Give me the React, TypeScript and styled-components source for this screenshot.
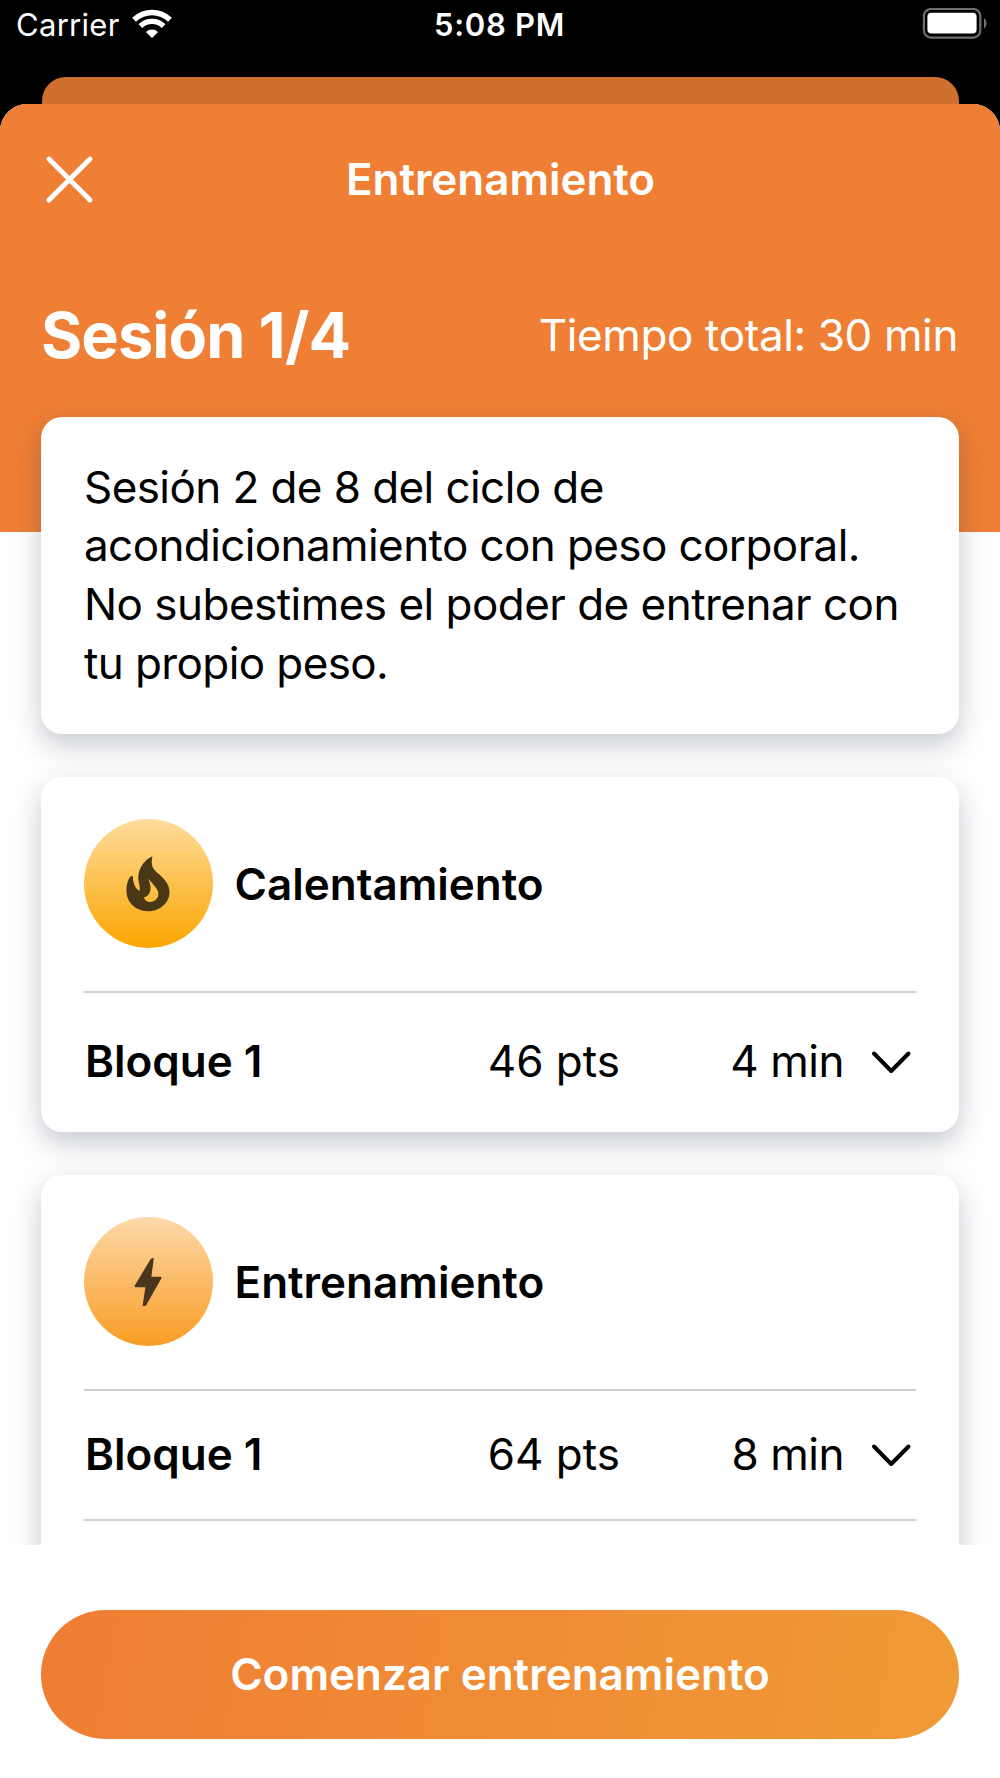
import React from "react";
import styled, { createGlobalStyle } from "styled-components";

const GlobalStyle = createGlobalStyle`
  * { box-sizing: border-box; }
  body { margin: 0; background: #000; }
  h1, h2, h3, p { margin: 0; }
  button { border: 0; padding: 0; background: none; font: inherit; color: inherit; }
`;

const Screen = styled.div`
  width: 1000px;
  height: 1778px;
  overflow: hidden;
  display: flex;
  flex-direction: column;
  background: #000;
  font-family: Inter, "Liberation Sans", sans-serif;
  font-size: 44px;
  color: #000;
`;

const StatusBar = styled.header`
  flex: none;
  height: 77px;
  padding: 6px 13px 0 16px;
  display: grid;
  grid-template-columns: 1fr auto 1fr;
  align-items: start;
  color: #fff;
  font-size: 31px;
  line-height: 38px;
`;

const Network = styled.div`
  display: flex;
  gap: 12px;
  letter-spacing: 0.3px;
`;

const Clock = styled.div`
  font-weight: 600;
  letter-spacing: 0.7px;
  padding-right: 4px;
`;

const BatterySlot = styled.div`
  display: flex;
  justify-content: flex-end;
`;

const StatusIcon = styled.svg<{ $top: number }>`
  display: block;
  margin-top: ${(p) => p.$top}px;
`;

const BackSheet = styled.div`
  flex: none;
  height: 27px;
  margin: 0 41.5px;
  border-radius: 24px 24px 0 0;
  background: #d0702f;
`;

const Sheet = styled.main`
  flex: 1;
  min-height: 0;
  display: flex;
  flex-direction: column;
  border-radius: 27px 27px 0 0;
  overflow: hidden;
  background: #fff;
`;

const Content = styled.div`
  flex: none;
  height: 1441px;
  overflow: hidden;
  background: linear-gradient(#ef7f35 428px, #fff 428px);
`;

const NavBar = styled.div`
  height: 150px;
  padding: 0 44px;
  display: grid;
  grid-template-columns: 60px 1fr 60px;
  align-items: center;
  color: #fff;
`;

const CloseButton = styled.button`
  display: flex;
`;

const NavTitle = styled.h1`
  text-align: center;
  font-size: 44px;
  font-weight: 600;
  letter-spacing: -0.05px;
  padding-left: 1px;
`;

const SessionRow = styled.div`
  height: 163px;
  padding: 0 42px 1px 41px;
  display: flex;
  align-items: center;
  justify-content: space-between;
  color: #fff;
`;

const SessionTitle = styled.h2`
  font-size: 63px;
  font-weight: 700;
  letter-spacing: -0.9px;
`;

const TotalTime = styled.span`
  letter-spacing: -0.38px;
`;

const Cards = styled.div`
  padding: 0 41px;
  display: flex;
  flex-direction: column;
  gap: 43px;
`;

const Card = styled.section<{ $height: number }>`
  flex: none;
  height: ${(p) => p.$height}px;
  padding: 0 43px;
  border-radius: 21px;
  background: #fff;
  box-shadow: 0 11px 29px rgba(25, 38, 65, 0.25);
`;

const Description = styled.p`
  padding: 40.5px 0 0;
  line-height: 58.7px;
  white-space: nowrap;
`;

const Line = styled.span<{ $spacing: number }>`
  display: block;
  letter-spacing: ${(p) => p.$spacing}px;
`;

const CardHeader = styled.div`
  height: 213.5px;
  display: flex;
  align-items: center;
  gap: 21.5px;
`;

const Badge = styled.div<{ $from: string; $to: string }>`
  width: 129px;
  height: 129px;
  border-radius: 50%;
  display: flex;
  align-items: center;
  justify-content: center;
  padding-right: 1px;
  background: linear-gradient(${(p) => p.$from}, ${(p) => p.$to});
`;

const CardTitle = styled.h3`
  font-size: 44px;
  font-weight: 600;
`;

const BlockRow = styled.div<{ $height: number }>`
  height: ${(p) => p.$height}px;
  padding-bottom: 2px;
  border-top: 2px solid #d0d0d0;
  display: grid;
  grid-template-columns: 320px 216px 1fr 72px;
  align-items: center;
  text-align: right;
`;

const BlockName = styled.span`
  text-align: left;
  padding-left: 1px;
  font-weight: 600;
`;

const BlockTime = styled.span`
  letter-spacing: -0.45px;
`;

const Chevron = styled.svg`
  justify-self: end;
`;

const Footer = styled.footer`
  flex: 1;
  padding: 65px 41px 0;
`;

const StartButton = styled.button`
  display: block;
  width: 918px;
  height: 129px;
  padding-bottom: 2px;
  border-radius: 65px;
  background: linear-gradient(100deg, #ef7d34, #f09b36);
  color: #fff;
  font-weight: 600;
`;

const WifiIcon = () => (
  <StatusIcon $top={3} width="40" height="30" viewBox="0.5 0 41 30" fill="none" stroke="#fff">
    <path d="M2.6 10.6a26.4 26.4 0 0 1 36.8 0" strokeWidth="5.6" />
    <path d="M9.1 17.1a17.2 17.2 0 0 1 23.8 0" strokeWidth="5.4" />
    <path d="M21 29.4l-6.2-6.2a9 9 0 0 1 12.4 0z" fill="#fff" stroke="none" />
  </StatusIcon>
);

const BatteryIcon = () => (
  <StatusIcon $top={2} width="65" height="31" viewBox="0 0 65 31">
    <rect x="1.9" y="1" width="56.4" height="28.6" rx="7" fill="none" stroke="#6f6f6f" strokeWidth="2.2" />
    <rect x="5.4" y="4.8" width="49.2" height="20.8" rx="4" fill="#fff" />
    <path d="M62 10.200c3.400 1.600 3.400 8.600 0 10z" fill="#6f6f6f" />
  </StatusIcon>
);

const CloseIcon = () => (
  <svg width="51" height="51" viewBox="0 0 51 51">
    <path d="M5 5l41 41M46 5L5 46" stroke="#fff" strokeWidth="4.900" strokeLinecap="round" />
  </svg>
);

const FlameIcon = () => (
  <svg width="44" height="56" viewBox="0 0 44 56" fill="#4a3716">
    <path
      fillRule="evenodd"
      d="M26.400 0.300C25.600 5 25.200 9.500 27.800 13C31.500 18.500 43.500 24 43.500 36.200C43.500 46.500 34.200 55.200 22 55.200C9.500 55.200 0.500 46.200 0.500 35C0.500 29 1.600 23.500 4.500 20.400C5.600 19.500 7 19.800 7 21.200C7.100 27 9 33 13.800 34.800C14.500 30 11.600 25 12.400 19C13.500 11 18.600 4 26.400 0.300ZM22.400 22.500C24.400 28.500 25 31.500 24.300 34.500C23.600 38 21.500 40.500 18 41.600C18.600 45 22 46.500 25 46C29.600 45.300 32.700 42 32.300 37C31.900 32.500 27.500 29.500 22.400 22.500Z"
    />
  </svg>
);

const BoltIcon = () => (
  <svg width="28" height="50" viewBox="0 0 28 50" fill="#4a361d">
    <path d="M18 1.200Q19.800 0.600 19.700 2L17.400 19.800H26.600Q28 19.900 27.300 21.400L12 48.400Q10.900 49.500 9 48.900Q8.600 48.600 8.700 48L11.400 30.200H1.300Q0.200 30 0.800 28.600L16.400 2.400Q17 1.400 18 1.200Z" />
  </svg>
);

interface Block {
  name: string;
  points: string;
  time: string;
  height: number;
}

const BlockItem = ({ block }: { block: Block }) => (
  <BlockRow $height={block.height}>
    <BlockName>{block.name}</BlockName>
    <span>{block.points}</span>
    <BlockTime>{block.time}</BlockTime>
    <Chevron width="50" height="30" viewBox="0 0 50 30">
      <path d="M8 7.500L25.200 25L42.500 7.500" fill="none" stroke="#000" strokeWidth="4" strokeLinecap="round" strokeLinejoin="round" />
    </Chevron>
  </BlockRow>
);

const warmup: Block = { name: "Bloque 1", points: "46 pts", time: "4 min", height: 141.5 };
const training: Block = { name: "Bloque 1", points: "64 pts", time: "8 min", height: 130 };

const description = [
  { text: "Sesión 2 de 8 del ciclo de", spacing: -0.58 },
  { text: "acondicionamiento con peso corporal.", spacing: -0.6 },
  { text: "No subestimes el poder de entrenar con", spacing: -0.53 },
  { text: "tu propio peso.", spacing: -0.6 },
];

export default function App() {
  return (
    <>
      <GlobalStyle />
      <Screen>
        <StatusBar>
          <Network>
            Carrier
            <WifiIcon />
          </Network>
          <Clock>5:08 PM</Clock>
          <BatterySlot>
            <BatteryIcon />
          </BatterySlot>
        </StatusBar>
        <BackSheet />
        <Sheet>
          <Content>
            <NavBar>
              <CloseButton aria-label="Cerrar">
                <CloseIcon />
              </CloseButton>
              <NavTitle>Entrenamiento</NavTitle>
            </NavBar>
            <SessionRow>
              <SessionTitle>Sesión 1/4</SessionTitle>
              <TotalTime>Tiempo total: 30 min</TotalTime>
            </SessionRow>
            <Cards>
              <Card $height={317}>
                <Description>
                  {description.map((line) => (
                    <Line key={line.text} $spacing={line.spacing}>
                      {line.text}
                    </Line>
                  ))}
                </Description>
              </Card>
              <Card $height={355}>
                <CardHeader>
                  <Badge $from="#fedc9c" $to="#fba600">
                    <FlameIcon />
                  </Badge>
                  <CardTitle>Calentamiento</CardTitle>
                </CardHeader>
                <BlockItem block={warmup} />
              </Card>
              <Card $height={520}>
                <CardHeader>
                  <Badge $from="#fdd9ab" $to="#f99d24">
                    <BoltIcon />
                  </Badge>
                  <CardTitle>Entrenamiento</CardTitle>
                </CardHeader>
                <BlockItem block={training} />
                <BlockRow $height={129} />
              </Card>
            </Cards>
          </Content>
          <Footer>
            <StartButton>Comenzar entrenamiento</StartButton>
          </Footer>
        </Sheet>
      </Screen>
    </>
  );
}
